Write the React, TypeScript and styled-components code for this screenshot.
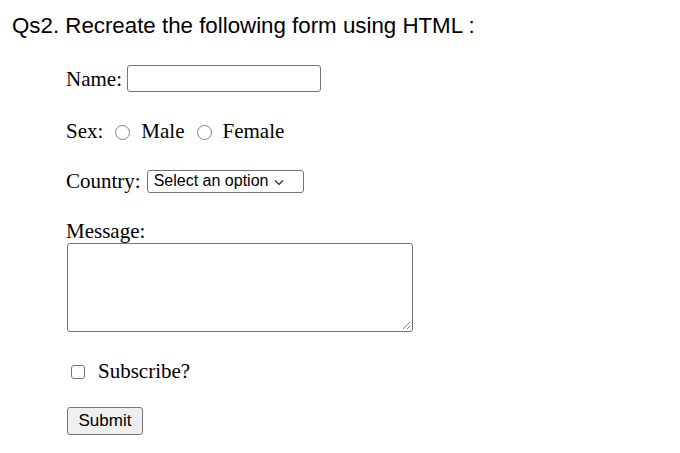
import React from "react";
import styled, { createGlobalStyle } from "styled-components";

const Global = createGlobalStyle`
  html, body { margin: 0; padding: 0; background: #fff; }
  body { width: 680px; height: 453px; overflow: hidden; }
`;

const Page = styled.div`
  padding: 13px 0 0 12px;
  color: #000;
`;

const Title = styled.h2`
  margin: 0;
  font-family: "Liberation Sans", Arial, sans-serif;
  font-weight: normal;
  font-size: 22.3px;
  line-height: 25px;
`;

const Form = styled.form`
  display: flex;
  flex-direction: column;
  align-items: flex-start;
  padding: 27px 0 0 54px;
  font-family: "Liberation Serif", "Times New Roman", serif;
  font-size: 21px;
`;

const Row = styled.div<{ $mt?: number }>`
  display: flex;
  align-items: center;
  flex-wrap: nowrap;
  white-space: nowrap;
  margin-top: ${(p) => p.$mt ?? 0}px;
  line-height: 24px;
`;

const Label = styled.label<{ $gap?: number }>`
  margin-right: ${(p) => p.$gap ?? 5}px;
`;

const TextInput = styled.input`
  box-sizing: border-box;
  flex: none;
  width: 194px;
  height: 27px;
  border: 1px solid #767676;
  border-radius: 3px;
  padding: 2px 4px;
  margin: 0;
  font-size: 16px;
`;

const Radio = styled.span`
  display: block;
  flex: none;
  box-sizing: border-box;
  width: 15px;
  height: 15px;
  border: 1px solid #858585;
  border-radius: 50%;
  margin: 2px 11px 0 12px;
`;

const Select = styled.div`
  box-sizing: border-box;
  flex: none;
  display: flex;
  align-items: center;
  height: 23px;
  width: 157px;
  border: 1px solid #767676;
  border-radius: 3px;
  padding: 0 5px 0 6px;
  font-family: "Liberation Sans", Arial, sans-serif;
  font-size: 16px;
  gap: 6px;
`;

const Chevron = styled.svg`
  flex: none;
  margin-top: 2px;
`;

const Textarea = styled.div`
  position: relative;
  box-sizing: border-box;
  width: 346px;
  height: 89px;
  border: 1px solid #767676;
  border-radius: 3px;
  margin: 0 0 0 1px;
`;

const Grip = styled.svg`
  position: absolute;
  right: 1px;
  bottom: 1px;
`;

const Checkbox = styled.span`
  display: block;
  flex: none;
  box-sizing: border-box;
  width: 14px;
  height: 14px;
  border: 1px solid #767676;
  border-radius: 3px;
  margin: 1px 13px 0 5px;
`;

const Button = styled.div`
  box-sizing: border-box;
  width: 76px;
  height: 28px;
  margin-left: 1px;
  border: 1px solid #767676;
  border-radius: 3px;
  background: #efefef;
  display: flex;
  align-items: center;
  justify-content: center;
  font-family: "Liberation Sans", Arial, sans-serif;
  font-size: 17px;
`;

export default function App() {
  return (
    <>
      <Global />
      <Page>
        <Title>Qs2. Recreate the following form using HTML :</Title>
        <Form>
          <Row>
            <Label>Name:</Label>
            <TextInput type="text" />
          </Row>
          <Row $mt={27}>
            <span>Sex:</span>
            <Radio />
            <span>Male</span>
            <Radio />
            <span>Female</span>
          </Row>
          <Row $mt={26}>
            <Label $gap={6}>Country:</Label>
            <Select>
              <span>Select an option</span>
              <Chevron width="10" height="7" viewBox="0 0 10 7">
                <path d="M1 1.5 L5 5.5 L9 1.5" fill="none" stroke="#222" strokeWidth="1.1" />
              </Chevron>
            </Select>
          </Row>
          <Row $mt={26}>
            <span>Message:</span>
          </Row>
          <Textarea>
            <Grip width="9" height="9" viewBox="0 0 9 9">
              <path d="M8 1 L1 8 M8 5 L5 8" stroke="#888" strokeWidth="1" />
            </Grip>
          </Textarea>
          <Row $mt={27}>
            <Checkbox />
            <span>Subscribe?</span>
          </Row>
          <Row $mt={24}>
            <Button>Submit</Button>
          </Row>
        </Form>
      </Page>
    </>
  );
}
